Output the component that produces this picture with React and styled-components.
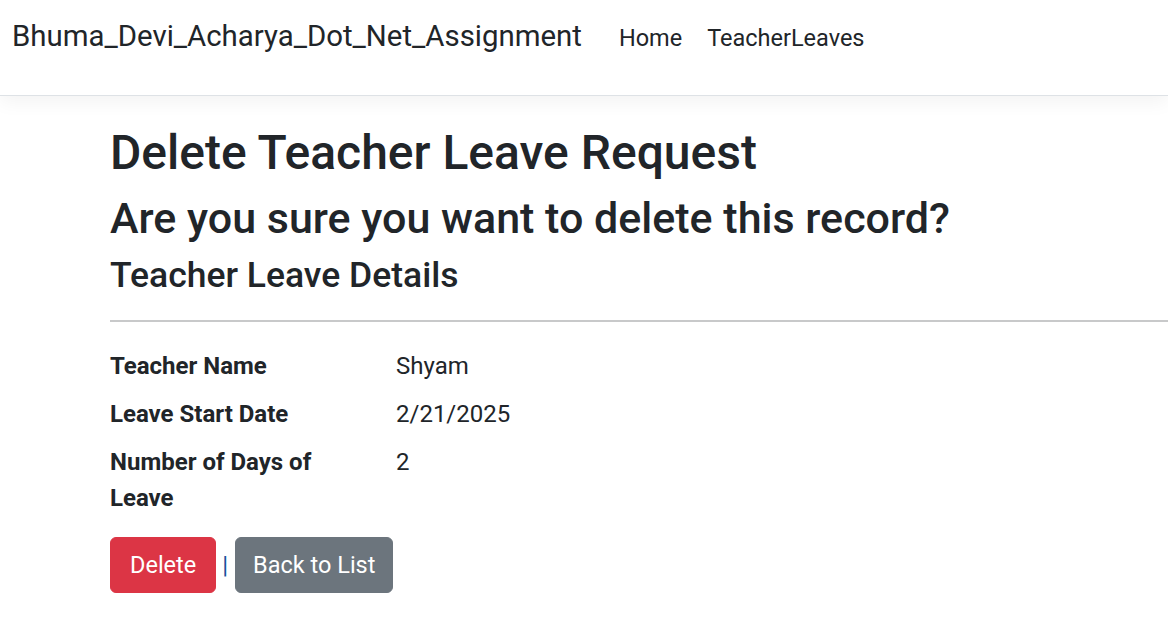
import React from 'react';
import styled, { createGlobalStyle } from 'styled-components';

const GlobalStyle = createGlobalStyle`
  html, body {
    margin: 0;
    padding: 0;
    background: #fff;
  }
  body {
    font-family: Roboto, "Noto Sans", sans-serif;
    color: #212529;
    font-size: 24px;
    line-height: 1.5;
    overflow: hidden;
  }
`

const Header = styled.header`
  height: 95px;
  border-bottom: 1px solid #dee2e6;
  box-shadow: 0 6px 18px rgba(0, 0, 0, 0.05);
  background: #fff;
`
const Nav = styled.nav`
  display: flex;
  align-items: baseline;
  padding: 14px 12px 0;
`
const Brand = styled.a`
  font-size: 29.4px;
  color: #212529;
  text-decoration: none;
  margin-right: 24px;
  white-space: nowrap;
`
const NavList = styled.ul`
  display: flex;
  list-style: none;
  margin: 0;
  padding: 0 0 0 13px;
  gap: 25px;
`
const NavLink = styled.a`
  font-size: 23.5px;
  color: #212529;
  text-decoration: none;
`

const Main = styled.main`
  padding: 28px 0 0 110px;
`
const Title = styled.h1`
  font-size: 48px;
  font-weight: 500;
  line-height: 1.2;
  margin: 0 0 11px;
`
const Question = styled.h2`
  font-size: 43px;
  font-weight: 500;
  line-height: 1.2;
  margin: 0 0 10px;
`
const SubTitle = styled.h4`
  font-size: 35.5px;
  font-weight: 500;
  line-height: 1.2;
  margin: 0;
`
const Rule = styled.hr`
  border: 0;
  border-top: 2px solid #c8c9ca;
  margin: 23px 0 26px;
`
const Details = styled.dl`
  display: grid;
  grid-template-columns: 250px 1fr;
  column-gap: 36px;
  margin: 0 0 9px;
`
const Term = styled.dt`
  font-weight: 700;
  margin: 0 0 12px;
`
const Value = styled.dd`
  margin: 0 0 12px;
`

const Actions = styled.form`
  display: flex;
  align-items: center;
`
const Button = styled.button`
  font-family: inherit;
  font-size: 23.5px;
  line-height: 36px;
  color: #fff;
  background: ${p => (p.$variant === 'danger' ? '#dc3545' : '#6c757d')};
  border: 1px solid ${p => (p.$variant === 'danger' ? '#dc3545' : '#6c757d')};
  border-radius: 6px;
  padding: 9px ${p => (p.$variant === 'danger' ? '19px' : '17px')};
  cursor: pointer;
`
const Separator = styled.span`
  color: #1a4f9c;
  margin: 0 7px 0 6px;
`

const details = [
  { label: 'Teacher Name', value: 'Shyam' },
  { label: 'Leave Start Date', value: '2/21/2025' },
  { label: 'Number of Days of Leave', value: '2' },
]

const App = () => {
  return (
    <>
      <GlobalStyle />
      <Header>
        <Nav>
          <Brand href='/'>Bhuma_Devi_Acharya_Dot_Net_Assignment</Brand>
          <NavList>
            <li><NavLink href='/'>Home</NavLink></li>
            <li><NavLink href='/TeacherLeaves'>TeacherLeaves</NavLink></li>
          </NavList>
        </Nav>
      </Header>
      <Main>
        <Title>Delete Teacher Leave Request</Title>
        <Question>Are you sure you want to delete this record?</Question>
        <SubTitle>Teacher Leave Details</SubTitle>
        <Rule />
        <Details>
          {details.map(d => (
            <React.Fragment key={d.label}>
              <Term>{d.label}</Term>
              <Value>{d.value}</Value>
            </React.Fragment>
          ))}
        </Details>
        <Actions onSubmit={e => e.preventDefault()}>
          <Button $variant='danger' type='submit'>Delete</Button>
          <Separator>|</Separator>
          <Button type='button'>Back to List</Button>
        </Actions>
      </Main>
    </>
  )
}

export default App;
